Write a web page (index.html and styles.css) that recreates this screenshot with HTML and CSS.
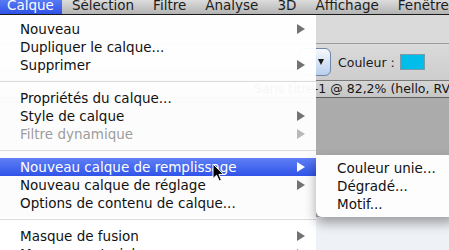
FILE: index.html
```html
<!DOCTYPE html>
<html lang="fr">
<head>
    <meta charset="UTF-8">
    <meta name="viewport" content="width=device-width, initial-scale=1.0">
    <title>Calque</title>
    <link rel="stylesheet" href="styles.css">
</head>
<body>
    <div class="screen">
        <div class="menubar">
            <span class="mb-item active">Calque</span>
            <span class="mb-item">Sélection</span>
            <span class="mb-item">Filtre</span>
            <span class="mb-item">Analyse</span>
            <span class="mb-item">3D</span>
            <span class="mb-item">Affichage</span>
            <span class="mb-item">Fenêtre</span>
        </div>

        <div class="workspace">
            <div class="appbar"></div>
            <div class="options">
                <div class="opt-spacer"></div>
                <div class="popup"><span class="popup-arrow"></span></div>
                <span class="opt-label">Couleur :</span>
                <span class="swatch"></span>
            </div>
            <div class="doc-title">Sans titre-1 @ 82,2% (hello, RVB/8) *</div>
            <div class="canvas"></div>
            <div class="image"></div>
        </div>

        <ul class="menu">
            <li class="item sub">Nouveau</li>
            <li class="item">Dupliquer le calque...</li>
            <li class="item sub">Supprimer</li>
            <li class="sep"></li>
            <li class="item">Propriétés du calque...</li>
            <li class="item sub">Style de calque</li>
            <li class="item sub disabled">Filtre dynamique</li>
            <li class="sep"></li>
            <li class="item sub selected">Nouveau calque de remplissage</li>
            <li class="item sub">Nouveau calque de réglage</li>
            <li class="item">Options de contenu de calque...</li>
            <li class="sep"></li>
            <li class="item sub">Masque de fusion</li>
            <li class="item sub">Masque vectoriel</li>
        </ul>

        <ul class="submenu">
            <li class="item">Couleur unie...</li>
            <li class="item">Dégradé...</li>
            <li class="item">Motif...</li>
        </ul>

        <svg class="cursor" width="14" height="20" viewBox="0 0 14 20">
            <path d="M1 1 L1 15.5 L4.6 12.2 L7.2 18 L9.4 17 L6.9 11.4 L11.6 11.4 Z" fill="#000" stroke="#fff" stroke-width="1" stroke-linejoin="round"/>
        </svg>
    </div>
</body>
</html>
```

FILE: styles.css
```css
*{
    margin: 0;
    padding: 0;
    box-sizing: border-box;
}
body{
    background: #fff;
}
.screen{
    position: relative;
    width: 449px;
    height: 250px;
    overflow: hidden;
    font-family: "DejaVu Sans", sans-serif;
    font-size: 13.5px;
    color: #111;
}

/* top menu bar */
.menubar{
    display: flex;
    height: 15px;
    background: linear-gradient(#dcdcdc, #b3b3b3);
    border-bottom: 1px solid #1a1a1a;
    overflow: hidden;
}
.mb-item{
    line-height: 14px;
    margin-top: -2px;
    padding: 0 9px 0 10px;
    color: #1c1c1c;
}
.mb-item.active{
    padding: 0 8px 0 7px;
    color: #fff;
    background: linear-gradient(#5f80f5, #2f52e8);
}

/* photoshop behind the menu */
.workspace{
    display: flex;
    flex-direction: column;
}
.appbar{
    height: 29px;
    background: #dadada;
    border-bottom: 1px solid #9c9c9c;
}
.options{
    display: flex;
    align-items: center;
    height: 37px;
    background: linear-gradient(#dadada, #cdcdcd);
    border-bottom: 1px solid #7a7a7a;
}
.opt-spacer{
    width: 300px;
}
.popup{
    display: flex;
    align-items: center;
    justify-content: flex-end;
    width: 31px;
    height: 28px;
    padding-right: 6px;
    border: 1px solid #6f86a8;
    border-radius: 0 6px 6px 0;
    background: linear-gradient(#f6f9fd, #b9cfee);
}
.popup-arrow{
    border-top: 6px solid #1b1b1b;
    border-left: 3px solid transparent;
    border-right: 3px solid transparent;
}
.opt-label{
    margin-left: 7px;
    font-size: 12.5px;
    color: #1a1a1a;
}
.swatch{
    width: 25px;
    height: 16px;
    margin-left: 5px;
    background: #00bde9;
    border: 1px solid #7a9aa8;
}
.doc-title{
    height: 17px;
    padding-left: 254px;
    font-size: 12.5px;
    line-height: 16px;
    white-space: nowrap;
    background: linear-gradient(#d6d6d6, #c6c6c6);
    border-bottom: 1px solid #626262;
    color: #151515;
}
.canvas{
    height: 119px;
    background: #ababab;
}
.image{
    height: 40px;
    background: #eef1f5;
}

/* menus */
.menu, .submenu{
    list-style: none;
    position: absolute;
}
.menu{
    left: 0;
    top: 15px;
    width: 316px;
    padding-top: 5px;
    background: rgba(255, 255, 255, 0.96);
}
.submenu{
    left: 316px;
    top: 155px;
    width: 140px;
    padding: 4px 0;
    background: rgba(255, 255, 255, 0.97);
    border-radius: 0 0 6px 6px;
    box-shadow: 0 6px 12px rgba(0, 0, 0, 0.35);
}
.item{
    display: flex;
    justify-content: space-between;
    align-items: center;
    height: 18px;
    padding: 0 11px 0 20px;
    white-space: nowrap;
}
.submenu .item{
    padding-left: 21px;
}
.item.sub::after{
    content: "";
    border-left: 8px solid #727272;
    border-top: 5px solid transparent;
    border-bottom: 5px solid transparent;
}
.item.disabled{
    color: #9c9c9c;
}
.item.disabled::after{
    border-left-color: #b9b9b9;
}
.item.selected{
    color: #fff;
    background: linear-gradient(#5f80f5, #3054e9);
}
.item.selected::after{
    border-left-color: #fff;
}
.sep{
    height: 1px;
    margin: 7px 0;
    background: #dcdcdc;
}

.cursor{
    position: absolute;
    left: 212px;
    top: 163px;
}
```
